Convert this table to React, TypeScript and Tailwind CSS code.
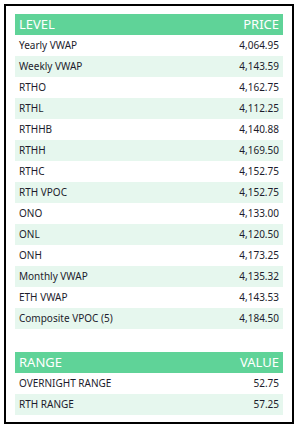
import React from "react";

interface Row {
  label: string;
  value: string;
}

const levels: Row[] = [
  { label: "Yearly VWAP", value: "4,064.95" },
  { label: "Weekly VWAP", value: "4,143.59" },
  { label: "RTHO", value: "4,162.75" },
  { label: "RTHL", value: "4,112.25" },
  { label: "RTHHB", value: "4,140.88" },
  { label: "RTHH", value: "4,169.50" },
  { label: "RTHC", value: "4,152.75" },
  { label: "RTH VPOC", value: "4,152.75" },
  { label: "ONO", value: "4,133.00" },
  { label: "ONL", value: "4,120.50" },
  { label: "ONH", value: "4,173.25" },
  { label: "Monthly VWAP", value: "4,135.32" },
  { label: "ETH VWAP", value: "4,143.53" },
  { label: "Composite VPOC (5)", value: "4,184.50" },
];

const ranges: Row[] = [
  { label: "OVERNIGHT RANGE", value: "52.75" },
  { label: "RTH RANGE", value: "57.25" },
];

function Table({ left, right, rows }: { left: string; right: string; rows: Row[] }) {
  return (
    <div className="flex flex-col">
      <div className="h-[21px] flex items-center justify-between px-1 bg-[#5fd398] text-white text-[13px]">
        <span>{left}</span>
        <span>{right}</span>
      </div>
      {rows.map((row, i) => (
        <div
          key={row.label}
          className={
            "h-[21px] flex items-center justify-between px-1 text-[10px] text-[#1c1c2c] " +
            (i % 2 === 1 ? "bg-[#e6f7ee]" : "bg-white")
          }
        >
          <span>{row.label}</span>
          <span>{row.value}</span>
        </div>
      ))}
    </div>
  );
}

export default function App() {
  return (
    <div className="w-[300px] h-[430px] bg-white p-1" style={{ fontFamily: '"Noto Sans", sans-serif' }}>
      <div className="w-[290px] border-2 border-black px-[9px] pt-[8px] pb-[7px] flex flex-col gap-[23px]">
        <Table left="LEVEL" right="PRICE" rows={levels} />
        <Table left="RANGE" right="VALUE" rows={ranges} />
      </div>
    </div>
  );
}
